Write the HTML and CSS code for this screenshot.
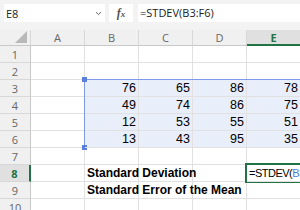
FILE: index.html
```html
<!DOCTYPE html>
<html lang="en">
<head>
    <meta charset="UTF-8">
    <title>STDEV</title>
    <link rel="stylesheet" href="styles.css">
</head>
<body>
    <div class="formula-bar">
        <div class="name-box">
            <span>E8</span>
            <svg class="caret" width="7" height="5" viewBox="0 0 7 5"><path d="M1 1.2 L3.5 3.6 L6 1.2" fill="none" stroke="#666" stroke-width="1"/></svg>
        </div>
        <div class="fx-box"><span class="fx">f<span class="fx-x">x</span></span></div>
        <div class="formula-input">=STDEV(B3:F6)</div>
    </div>
    <div class="sheet">
        <div class="corner"><div class="corner-tri"></div></div>
        <div class="col-head">A</div>
        <div class="col-head">B</div>
        <div class="col-head">C</div>
        <div class="col-head">D</div>
        <div class="col-head active">E</div>

        <div class="row-head">1</div><div class="cell"></div><div class="cell"></div><div class="cell"></div><div class="cell"></div><div class="cell"></div>
        <div class="row-head">2</div><div class="cell"></div><div class="cell"></div><div class="cell"></div><div class="cell"></div><div class="cell"></div>
        <div class="row-head">3</div><div class="cell"></div><div class="cell num">76</div><div class="cell num">65</div><div class="cell num">86</div><div class="cell num">78</div>
        <div class="row-head">4</div><div class="cell"></div><div class="cell num">49</div><div class="cell num">74</div><div class="cell num">86</div><div class="cell num">75</div>
        <div class="row-head">5</div><div class="cell"></div><div class="cell num">12</div><div class="cell num">53</div><div class="cell num">55</div><div class="cell num">51</div>
        <div class="row-head">6</div><div class="cell"></div><div class="cell num">13</div><div class="cell num">43</div><div class="cell num">95</div><div class="cell num">35</div>
        <div class="row-head">7</div><div class="cell"></div><div class="cell"></div><div class="cell"></div><div class="cell"></div><div class="cell"></div>
        <div class="row-head active">8</div><div class="cell"></div><div class="cell label">Standard Deviation</div><div class="cell"></div><div class="cell"></div><div class="cell edit">=STDEV(<span class="ref">B3</span></div>
        <div class="row-head">9</div><div class="cell"></div><div class="cell label">Standard Error of the Mean</div><div class="cell"></div><div class="cell"></div><div class="cell"></div>
        <div class="row-head">10</div><div class="cell"></div><div class="cell"></div><div class="cell"></div><div class="cell"></div><div class="cell"></div>

        <div class="range">
            <div class="handle top"></div>
            <div class="handle bottom"></div>
        </div>
        <div class="active-cell"></div>
    </div>
</body>
</html>
```

FILE: styles.css
```css
body {
    margin: 0;
    width: 300px;
    height: 210px;
    overflow: hidden;
    background-color: #ffffff;
    font-family: "Liberation Sans", Arial, sans-serif;
}

.formula-bar {
    display: flex;
    align-items: center;
    gap: 4px;
    height: 30px;
    padding: 0 0 4px 4px;
    box-sizing: border-box;
    background-color: #f3f3f3;
}
.name-box {
    display: flex;
    align-items: center;
    justify-content: space-between;
    width: 101px;
    height: 18px;
    padding: 0 3px 0 2px;
    box-sizing: border-box;
    background-color: #ffffff;
    font-family: "Open Sans", sans-serif;
    font-size: 11px;
    color: #222;
}
.fx-box {
    display: flex;
    align-items: center;
    justify-content: center;
    width: 24px;
    height: 18px;
    background-color: #ffffff;
}
.fx {
    font-family: "Liberation Serif", serif;
    font-style: italic;
    font-weight: bold;
    font-size: 12px;
    color: #555;
}
.fx-x {
    font-size: 9px;
}
.formula-input {
    flex: 1;
    height: 18px;
    margin-left: 1px;
    padding-left: 2px;
    background-color: #ffffff;
    font-family: "Open Sans", sans-serif;
    font-size: 11px;
    line-height: 18px;
    color: #222;
}

.sheet {
    position: relative;
    display: grid;
    grid-template-columns: 31px repeat(5, 54px);
    grid-template-rows: 16px repeat(10, 17px);
}
.sheet > div {
    box-sizing: border-box;
}
.corner, .col-head, .row-head {
    background-color: #f0f0f0;
    color: #666;
    font-family: "Open Sans", sans-serif;
    font-size: 11px;
    display: flex;
    align-items: center;
    justify-content: center;
}
.corner {
    position: relative;
    border-right: 1px solid #d8d8d8;
    border-bottom: 1px solid #c8c8c8;
}
.corner-tri {
    position: absolute;
    right: 3px;
    bottom: 2px;
    width: 0;
    height: 0;
    border-left: 12px solid transparent;
    border-bottom: 12px solid #b9b9b9;
}
.col-head {
    border-right: 1px solid #d8d8d8;
    border-bottom: 1px solid #c8c8c8;
}
.col-head.active {
    background-color: #e0e0e0;
    color: #217346;
    font-weight: bold;
    border-bottom: 2px solid #217346;
}
.row-head {
    border-right: 1px solid #c8c8c8;
    border-bottom: 1px solid #d8d8d8;
}
.row-head.active {
    background-color: #e0e0e0;
    color: #217346;
    font-weight: bold;
    border-right: 2px solid #217346;
}
.cell {
    border-right: 1px solid #e1e1e1;
    border-bottom: 1px solid #e1e1e1;
    font-size: 12.5px;
    line-height: 16px;
    color: #000;
    white-space: nowrap;
    padding: 0 2px;
}
.num {
    text-align: right;
    position: relative;
    z-index: 1;
}
.label {
    font-weight: bold;
    font-size: 12px;
    overflow: visible;
    position: relative;
    z-index: 1;
}
.edit {
    position: relative;
    z-index: 3;
    padding-left: 2px;
    font-size: 11px;
    letter-spacing: -0.5px;
    overflow: hidden;
}
.ref {
    color: #4f7fd8;
}

.range {
    position: absolute;
    left: 84px;
    top: 49px;
    width: 230px;
    height: 69px;
    box-sizing: border-box;
    border: 1px solid #7d9be6;
    background-color: #e9eefb;
}
.handle {
    position: absolute;
    left: -3px;
    width: 5px;
    height: 5px;
    background-color: #5b7fdd;
}
.handle.top {
    top: -3px;
}
.handle.bottom {
    bottom: -3px;
}
.active-cell {
    position: absolute;
    left: 245px;
    top: 133px;
    width: 70px;
    height: 20px;
    box-sizing: border-box;
    border: 2px solid #217346;
    z-index: 2;
}
```
